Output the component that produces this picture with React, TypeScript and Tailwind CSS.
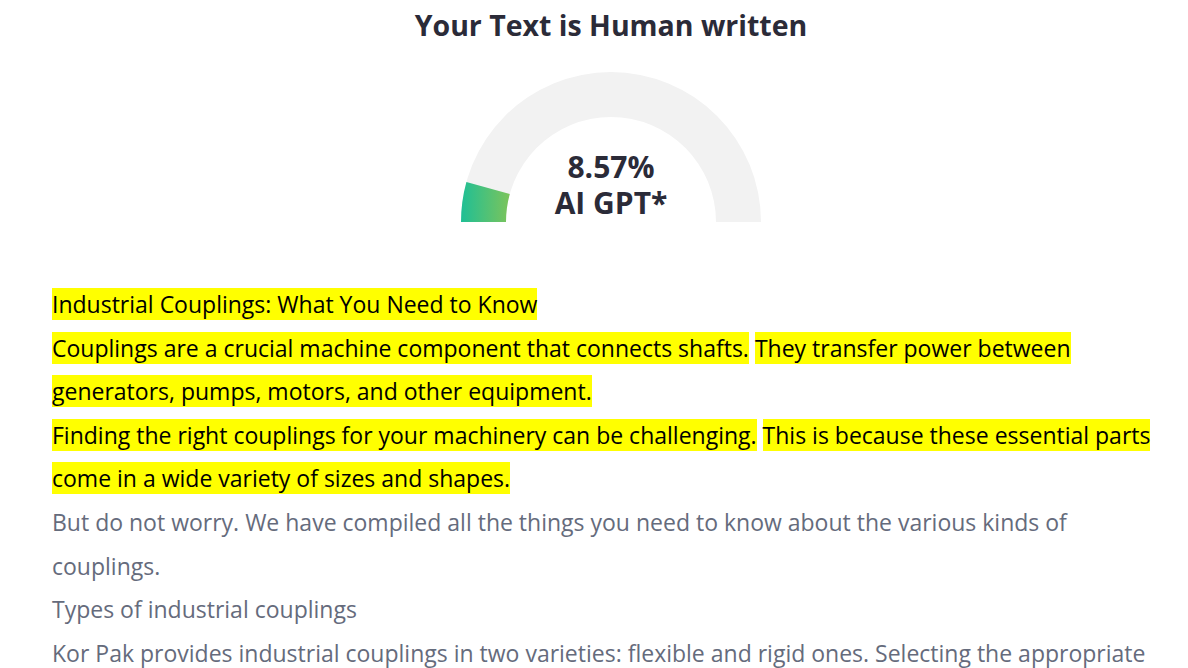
import React from 'react';

const FONT = '"Open Sans", "Noto Sans", "Liberation Sans", sans-serif';

function Gauge({ value }: { value: number }) {
  // semicircle, outer r 150, inner r 105, centre at (150,150)
  const a = Math.PI * (1 - value / 100);
  const ox = 150 + 150 * Math.cos(a);
  const oy = 150 - 150 * Math.sin(a);
  const ix = 150 + 105 * Math.cos(a);
  const iy = 150 - 105 * Math.sin(a);
  return (
    <div className="relative w-[300px] h-[150px]">
      <svg width="300" height="150" viewBox="0 0 300 150" className="block">
        <defs>
          <linearGradient id="g" x1="0" y1="0" x2="1" y2="0">
            <stop offset="0%" stopColor="#1fbf95" />
            <stop offset="100%" stopColor="#7cc45b" />
          </linearGradient>
        </defs>
        <path d="M0 150 A150 150 0 0 1 300 150 L255 150 A105 105 0 0 0 45 150 Z" fill="#f2f2f2" />
        <path
          d={`M0 150 A150 150 0 0 1 ${ox} ${oy} L${ix} ${iy} A105 105 0 0 0 45 150 Z`}
          fill="url(#g)"
        />
      </svg>
      <div className="absolute inset-x-0 top-[77px] flex flex-col items-center text-[30px] font-bold leading-[36px] text-[#2b2b38]">
        <span>{value}%</span>
        <span>AI GPT*</span>
      </div>
    </div>
  );
}

const Hl = ({ children }: { children: React.ReactNode }) => (
  <span className="bg-[#ffff00] text-black">{children}</span>
);

export default function App() {
  return (
    <div className="min-h-screen bg-white pl-[52px] pr-[18px]" style={{ fontFamily: FONT }}>
      <h1 className="pt-1 text-center text-[28.5px] font-bold leading-[42px] text-[#2b2b38]">
        Your Text is Human written
      </h1>
      <div className="mt-[26px] flex justify-center">
        <Gauge value={8.57} />
      </div>
      <div className="mt-[61px] text-[23px] leading-[43.6px] text-[#656b7c]">
        <div>
          <Hl>Industrial Couplings: What You Need to Know</Hl>
        </div>
        <div>
          <Hl>Couplings are a crucial machine component that connects shafts.</Hl>{' '}
          <Hl>They transfer power between generators, pumps, motors, and other equipment.</Hl>
        </div>
        <div>
          <Hl>Finding the right couplings for your machinery can be challenging.</Hl>{' '}
          <Hl>This is because these essential parts come in a wide variety of sizes and shapes.</Hl>
        </div>
        <div>But do not worry. We have compiled all the things you need to know about the various kinds of couplings.</div>
        <div>Types of industrial couplings</div>
        <div>
          Kor Pak provides industrial couplings in two varieties: flexible and rigid ones. Selecting the appropriate
          coupling for your application is essential.
        </div>
      </div>
    </div>
  );
}
